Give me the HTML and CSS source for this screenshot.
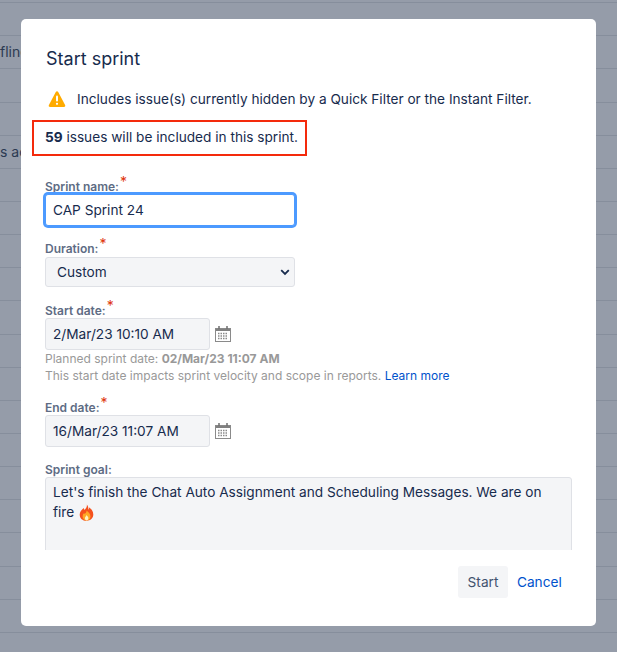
FILE: index.html
```html
<!DOCTYPE html>
<html lang="en">
<head>
    <meta charset="UTF-8">
    <meta name="viewport" content="width=device-width, initial-scale=1.0">
    <title>Start sprint</title>
    <link rel="stylesheet" href="styles.css">
</head>
<body>
    <!-- dimmed board behind the dialog -->
    <div class="backlog">
        <div class="row"></div>
        <div class="row"></div>
        <div class="row">fline</div>
        <div class="row"></div>
        <div class="row"></div>
        <div class="row">s ac</div>
        <div class="row"></div>
        <div class="row"></div>
        <div class="row"></div>
        <div class="row"></div>
        <div class="row"></div>
        <div class="row"></div>
        <div class="row"></div>
        <div class="row"></div>
        <div class="row"></div>
        <div class="row"></div>
        <div class="row"></div>
        <div class="row"></div>
        <div class="row"></div>
        <div class="row"></div>
    </div>

    <div class="dialog">
        <h2 class="dialog-title">Start sprint</h2>

        <div class="warning">
            <svg class="warning-icon" width="18" height="18" viewBox="0 0 18 18">
                <path d="M9 1.200c-.5 0-.9.3-1.200.8L.9 15c-.5 1 .1 2 1.200 2h13.800c1.100 0 1.700-1 1.200-2L10.200 2c-.3-.5-.7-.8-1.200-.8z" fill="#ffab00"/>
                <rect x="8" y="5.500" width="2" height="6" rx="1" fill="#fff"/>
                <circle cx="9" cy="13.800" r="1.100" fill="#fff"/>
            </svg>
            <span>Includes issue(s) currently hidden by a Quick Filter or the Instant Filter.</span>
        </div>

        <div class="issue-count"><strong>59</strong> issues will be included in this sprint.</div>

        <div class="form-body">
            <div class="field">
                <label class="field-label">Sprint name:<span class="req">*</span></label>
                <input class="text-input focused" type="text" value="CAP Sprint 24">
            </div>

            <div class="field field-duration">
                <label class="field-label">Duration:<span class="req">*</span></label>
                <div class="select-wrap">
                    <select class="select-input">
                        <option>Custom</option>
                    </select>
                    <svg class="chevron" width="10" height="7" viewBox="0 0 10 7">
                        <path d="M1.200 1.200L5 5l3.800-3.800" fill="none" stroke="#172b4d" stroke-width="1.800"/>
                    </svg>
                </div>
            </div>

            <div class="field field-start">
                <label class="field-label">Start date:<span class="req">*</span></label>
                <div class="date-row">
                    <input class="text-input date-input" type="text" value="2/Mar/23 10:10 AM">
                    <svg class="cal-icon" width="16" height="16" viewBox="0 0 16 16">
                        <use href="#cal"/>
                    </svg>
                </div>
                <div class="help">Planned sprint date: <b>02/Mar/23 11:07 AM</b></div>
                <div class="help">This start date impacts sprint velocity and scope in reports. <a href="#">Learn more</a></div>
            </div>

            <div class="field field-end">
                <label class="field-label">End date:<span class="req">*</span></label>
                <div class="date-row">
                    <input class="text-input date-input" type="text" value="16/Mar/23 11:07 AM">
                    <svg class="cal-icon" width="16" height="16" viewBox="0 0 16 16">
                        <use href="#cal"/>
                    </svg>
                </div>
            </div>

            <div class="field field-goal">
                <label class="field-label">Sprint goal:</label>
                <div class="goal-box">Let's finish the Chat Auto Assignment and Scheduling Messages. We are on fire
                    <svg class="fire" width="15" height="17" viewBox="0 0 15 17">
                        <path d="M7.800.4c.6 2.600-1 4-2.300 5.600-.4-.7-.6-1.300-.6-2.100C2.500 5.700.7 8 .7 10.700.7 14.300 3.500 16.800 7.500 16.800s6.800-2.600 6.800-6.200c0-4.300-3-6.500-4.200-7.200.1 1-.1 1.700-.6 2.400C9.400 4 9.300 1.700 7.800.4z" fill="#f4511e"/>
                        <path d="M7.600 6.500c.2 1.600-1 2.400-1.900 3.600-.3-.3-.5-.7-.6-1.100-1 1-1.500 2.100-1.500 3.300 0 2.400 1.700 4.200 3.900 4.200s4-1.700 4-4.100c0-2.800-2.300-4.300-3.900-5.900z" fill="#ffa726"/>
                        <path d="M7.600 11c-.1 1-1.700 1.700-1.700 3.300 0 1.200.8 2.200 1.700 2.200s1.800-1 1.800-2.200c0-1.400-1.300-2.200-1.800-3.300z" fill="#fff3c4"/>
                    </svg>
                </div>
            </div>
        </div>

        <div class="dialog-footer">
            <button class="start-btn">Start</button>
            <a class="cancel-link" href="#">Cancel</a>
        </div>
    </div>

    <svg class="defs" width="0" height="0">
        <defs>
            <g id="cal" fill="none">
                <rect x=".5" y="2.500" width="15" height="13" stroke="#8a8a8a"/>
                <path d="M1 4h14" stroke="#808080" stroke-width="2"/>
                <path d="M4 0v3M12 0v3" stroke="#707070" stroke-width="1.500"/>
                <path d="M3 7.500h10M3 10h10M3 12.500h10" stroke="#8a8a8a" stroke-width="1.500" stroke-dasharray="1.500 1"/>
            </g>
        </defs>
    </svg>
</body>
</html>
```

FILE: styles.css
```css
body {
    margin: 0;
    height: 652px;
    overflow: hidden;
    background-color: #959ca9;
    font-family: Inter, 'Liberation Sans', sans-serif;
    font-size: 13.65px;
    color: #172b4d;
}

.backlog {
    margin-top: -30px;
}

.row {
    height: 32.15px;
    border-bottom: 1px solid #868e9c;
    line-height: 32px;
    color: #2c3a52;
    font-size: 14px;
    white-space: nowrap;
}

.dialog {
    position: absolute;
    left: 21px;
    top: 19px;
    width: 575px;
    height: 607px;
    background: #fff;
    border-radius: 5px;
    display: flex;
    flex-direction: column;
}

.dialog-title {
    margin: 28px 0 0 25px;
    font-size: 18px;
    line-height: 24px;
    font-weight: 400;
}

.warning {
    display: flex;
    align-items: center;
    gap: 11px;
    margin: 18px 0 0 27px;
    height: 20px;
}

.warning-icon {
    flex-shrink: 0;
}

.issue-count {
    align-self: flex-start;
    box-sizing: border-box;
    width: 275px;
    height: 36px;
    margin: 11px 0 0 11px;
    padding-left: 11px;
    border: 2px solid #f42a0c;
    line-height: 31px;
    white-space: nowrap;
}

.issue-count strong {
    font-weight: 700;
}

.form-body {
    margin: 16px 0 0 22px;
    padding: 6px 0 0 2px;
    height: 372px;
    overflow: hidden;
    flex-shrink: 0;
}

.field-duration {
    margin-top: 14px;
}

.field-start {
    margin-top: 15px;
}

.field-end {
    margin-top: 15px;
}

.field-goal {
    margin-top: 14px;
}

.field-label {
    display: block;
    font-size: 12px;
    line-height: 18px;
    margin-bottom: -2px;
    font-weight: 600;
    color: #5e6c84;
}

.req {
    color: #de350b;
    font-size: 14px;
    font-weight: 400;
    position: relative;
    top: -4px;
    margin-left: 1px;
    line-height: 0;
}

.text-input {
    display: block;
    position: relative;
    box-sizing: border-box;
    width: 250px;
    height: 32px;
    padding: 0 7px;
    margin: 0;
    border: 1px solid #dfe1e6;
    border-radius: 3px;
    background: #f4f5f7;
    color: #172b4d;
    font-family: inherit;
    font-size: 13.65px;
    outline: none;
}

.text-input.focused {
    background: #fff;
    border-color: #4c9aff;
    box-shadow: 0 0 0 2px #4c9aff;
}

.select-wrap {
    position: relative;
    width: 250px;
    margin-top: 1px;
}

.select-input {
    display: block;
    appearance: none;
    box-sizing: border-box;
    width: 250px;
    height: 30px;
    padding: 0 11px;
    margin: 0;
    border: 1px solid #dfe1e6;
    border-radius: 3px;
    background: #f4f5f7;
    color: #172b4d;
    font-family: inherit;
    font-size: 13.65px;
}

.chevron {
    position: absolute;
    right: 5px;
    top: 12px;
}

.date-row {
    display: flex;
    align-items: center;
    gap: 5px;
}

.date-input {
    width: 165px;
}

.cal-icon {
    flex-shrink: 0;
}

.help {
    font-size: 12px;
    line-height: 17px;
    color: #999;
    white-space: nowrap;
}

.help a {
    color: #0052cc;
    text-decoration: none;
}

.goal-box {
    position: relative;
    box-sizing: border-box;
    width: 527px;
    height: 120px;
    padding: 4px 7px;
    border: 1px solid #dfe1e6;
    border-radius: 3px;
    background: #f4f5f7;
    line-height: 20px;
}

.fire {
    vertical-align: -4px;
    margin-left: 1px;
}

.dialog-footer {
    display: flex;
    align-items: center;
    margin: 16px 0 0 437px;
    gap: 9px;
}

.start-btn {
    width: 50px;
    height: 32px;
    padding: 0;
    border: none;
    border-radius: 3px;
    background: #f4f5f7;
    color: #42526e;
    font-family: inherit;
    font-size: 13.65px;
}

.cancel-link {
    color: #0052cc;
    text-decoration: none;
}

.defs {
    position: absolute;
}
```
